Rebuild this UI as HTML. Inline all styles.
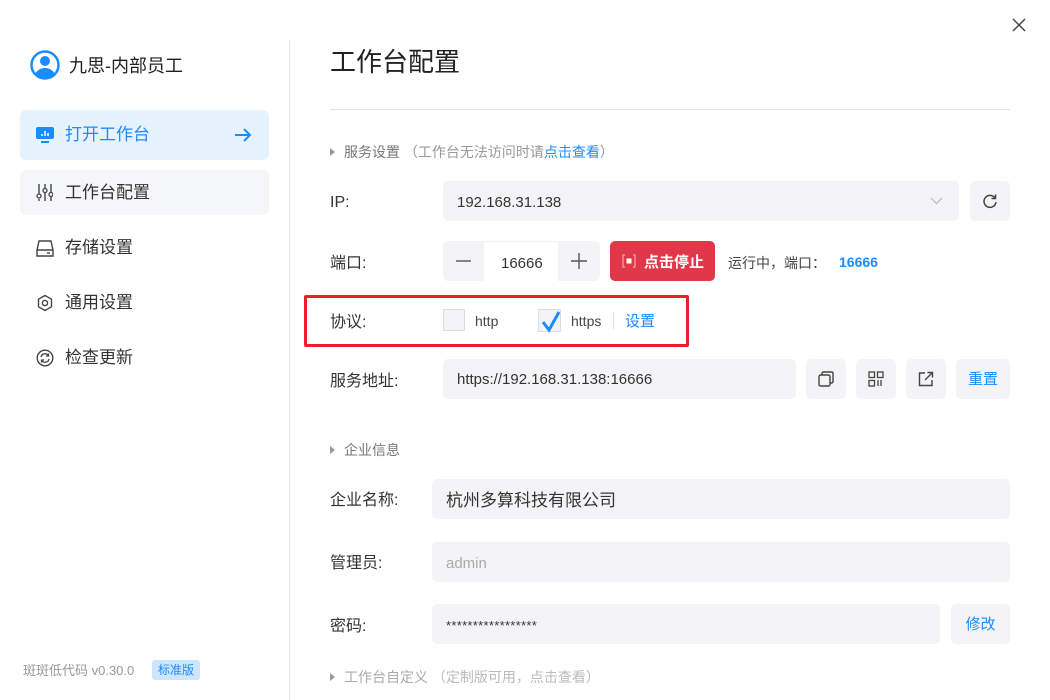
<!DOCTYPE html>
<html><head><meta charset="utf-8"><style>
*{box-sizing:border-box;margin:0;padding:0}
body{width:1050px;height:700px;overflow:hidden;background:#fff;font-family:"Liberation Sans","Noto Sans CJK SC",sans-serif;color:#333;position:relative;line-height:1.2}
.a{position:absolute}
.box{position:absolute;background:#f4f4f6;border-radius:5px}
.lbl{position:absolute;font-size:16px;color:#333;left:330px}
.mi{position:absolute;left:20px;width:249px;border-radius:6px;font-size:17px;color:#333}
.mi span{position:absolute;left:45px}
.btn{position:absolute;background:#f4f4f6;border-radius:5px;width:40px;height:40px;display:flex;align-items:center;justify-content:center}
.sec{position:absolute;left:330px;font-size:14px;color:#777}
.sec:before{content:"";display:inline-block;border-left:5px solid #999;border-top:4px solid transparent;border-bottom:4px solid transparent;margin-right:9px;vertical-align:1px}
</style></head><body>
<svg class="a" style="left:1012px;top:18px" width="14" height="14"><path d="M1 1L13 13M13 1L1 13" stroke="#444" stroke-width="1.5"/></svg>
<svg class="a" style="left:30px;top:50px" width="30" height="30" viewBox="0 0 30 30"><circle cx="15" cy="15" r="13.5" fill="none" stroke="#1a8cff" stroke-width="2.5"/><circle cx="15" cy="11" r="5" fill="#1a8cff"/><path d="M5 24c3-5 7-6 10-6s7 1 10 6c-3 3-6 4-10 4s-7-1-10-4z" fill="#1a8cff"/></svg>
<div class="a" style="left:69px;top:56px;font-size:18px;color:#222">九思-内部员工</div>
<div class="mi" style="top:110px;height:50px;background:#e6f3fe;color:#1a8cff"><svg class="a" style="left:16px;top:17px" width="18" height="17"><rect x="0" y="0" width="18" height="12" rx="2" fill="#1a8cff"/><rect x="5" y="14" width="8" height="2" fill="#1a8cff"/><path d="M6 9V7M9 9V4M12 9V6" stroke="#fff" stroke-width="1.5"/></svg><span style="top:15px">打开工作台</span><svg class="a" style="left:214px;top:18px" width="18" height="14"><path d="M1 7H16M10 1L16 7L10 13" stroke="#1a8cff" stroke-width="2" fill="none"/></svg></div>
<div class="mi" style="top:170px;height:45px;background:#f5f6f8"><svg class="a" style="left:16px;top:14px" width="17" height="17"><path d="M3 0V10M9 0V4M15 0V8M3 15V17M9 9V17M15 13V17" stroke="#444" stroke-width="1.4"/><circle cx="3" cy="12" r="2" fill="none" stroke="#444" stroke-width="1.3"/><circle cx="9" cy="6.5" r="2" fill="none" stroke="#444" stroke-width="1.3"/><circle cx="15" cy="10.5" r="2" fill="none" stroke="#444" stroke-width="1.3"/></svg><span style="top:13px">工作台配置</span></div>
<div class="mi" style="top:236px;height:24px"><svg class="a" style="left:16px;top:4px" width="18" height="17"><path d="M3 1H15L17 10V16H1V10ZM1 10H17" stroke="#444" stroke-width="1.4" fill="none"/><path d="M11 13H14" stroke="#444" stroke-width="1.4"/></svg><span style="top:2px">存储设置</span></div>
<div class="mi" style="top:291px;height:24px"><svg class="a" style="left:16px;top:3px" width="18" height="18" viewBox="0 0 18 18"><path d="M9 1.5L15.5 5.2V12.8L9 16.5L2.5 12.8V5.2Z" stroke="#444" stroke-width="1.4" fill="none" stroke-linejoin="round"/><circle cx="9" cy="9" r="2.6" fill="none" stroke="#444" stroke-width="1.4"/></svg><span style="top:2px">通用设置</span></div>
<div class="mi" style="top:346px;height:24px"><svg class="a" style="left:16px;top:3px" width="18" height="18" viewBox="0 0 18 18"><circle cx="9" cy="9" r="7.8" fill="none" stroke="#444" stroke-width="1.4"/><path d="M5 8A4 4 0 0 1 12.5 7M13 10A4 4 0 0 1 5.5 11M12.5 4.5V7H10M5.5 13.5V11H8" stroke="#444" stroke-width="1.3" fill="none"/></svg><span style="top:2px">检查更新</span></div>
<div class="a" style="left:23px;top:663px;font-size:13px;color:#999">斑斑低代码 v0.30.0</div>
<div class="a" style="left:152px;top:660px;width:48px;height:20px;background:#cce6ff;border-radius:3px;color:#1a8cff;font-size:12px;text-align:center;line-height:20px">标准版</div>
<div class="a" style="left:289px;top:40px;width:1px;height:660px;background:#e5e5e5"></div>
<div class="a" style="left:330px;top:47px;font-size:26px;color:#222">工作台配置</div>
<div class="a" style="left:330px;top:109px;width:680px;height:1px;background:#e3e3e3"></div>
<div class="sec" style="top:144px">服务设置 <span style="color:#999">（工作台无法访问时请<span style="color:#1a8cff">点击查看</span>）</span></div>
<div class="lbl" style="top:193px">IP:</div>
<div class="box" style="left:443px;top:181px;width:516px;height:40px"><span class="a" style="left:14px;top:13px;font-size:15px">192.168.31.138</span><svg class="a" style="left:487px;top:16px" width="13" height="8"><path d="M1 1L6.5 6.5L12 1" stroke="#bbb" stroke-width="1.2" fill="none"/></svg></div>
<div class="btn" style="left:970px;top:181px"><svg width="16" height="16" viewBox="0 0 16 16"><path d="M13 5A6 6 0 1 0 14 9" stroke="#444" stroke-width="1.5" fill="none"/><path d="M13.5 1.5V5.5H9.5" stroke="#444" stroke-width="1.5" fill="none"/></svg></div>
<div class="lbl" style="top:254px">端口:</div>
<div class="box" style="left:443px;top:241px;width:157px;height:40px"><div class="a" style="left:41px;top:0;width:74px;height:40px;background:#fff;border-top:1px solid #f4f4f6"></div><svg class="a" style="left:13px;top:19px" width="15" height="2"><path d="M0 1H15" stroke="#555" stroke-width="1.4"/></svg><span class="a" style="left:58px;top:14px;font-size:15px">16666</span><svg class="a" style="left:128px;top:12px" width="16" height="16"><path d="M0 8H16M8 0V16" stroke="#555" stroke-width="1.4"/></svg></div>
<div class="a" style="left:610px;top:241px;width:105px;height:40px;background:#e03848;border-radius:5px;color:#fff;font-size:15px;font-weight:bold"><svg class="a" style="left:12px;top:13px" width="14" height="14"><path d="M3 1H1V13H3M11 1H13V13H11" stroke="#f4aab0" stroke-width="1.2" fill="none"/><rect x="4.5" y="4.5" width="5" height="5" fill="#fff"/></svg><span class="a" style="left:34px;top:13px">点击停止</span></div>
<div class="a" style="left:728px;top:255px;font-size:14px;color:#444">运行中，端口：</div>
<div class="a" style="left:839px;top:254px;font-size:14px;color:#1a8cff;font-weight:bold">16666</div>
<div class="a" style="left:304px;top:295px;width:385px;height:52px;border:3px solid #e8202a;border-radius:2px"></div>
<div class="lbl" style="top:313px">协议:</div>
<div class="a" style="left:443px;top:309px;width:22px;height:22px;background:#f4f4f6;border:1px solid #dcdde2"></div>
<div class="a" style="left:475px;top:313px;font-size:14px;color:#444">http</div>
<div class="a" style="left:538px;top:309px;width:23px;height:23px;background:#f4f4f6;border:1px solid #dcdde2"><svg class="a" style="left:2px;top:1px" width="20" height="22"><path d="M2 11L8 19L18 1" stroke="#1a8cff" stroke-width="3" fill="none"/></svg></div>
<div class="a" style="left:571px;top:313px;font-size:14px;color:#444">https</div>
<div class="a" style="left:613px;top:312px;width:1px;height:17px;background:#ddd"></div>
<div class="a" style="left:625px;top:313px;font-size:15px;color:#1a8cff">设置</div>
<div class="lbl" style="top:372px">服务地址:</div>
<div class="box" style="left:443px;top:359px;width:353px;height:40px"><span class="a" style="left:14px;top:12px;font-size:15px">https://192.168.31.138:16666</span></div>
<div class="btn" style="left:806px;top:359px"><svg width="16" height="16"><rect x="1" y="4" width="11" height="11" rx="1.5" fill="none" stroke="#444" stroke-width="1.4"/><path d="M4 4V2.5Q4 1 5.5 1H13.5Q15 1 15 2.5V10.5Q15 12 13.5 12H12" fill="none" stroke="#444" stroke-width="1.4"/></svg></div>
<div class="btn" style="left:856px;top:359px"><svg width="16" height="16"><rect x="1" y="1" width="5.5" height="5.5" fill="none" stroke="#444" stroke-width="1.3"/><rect x="9.5" y="1" width="5.5" height="5.5" fill="none" stroke="#444" stroke-width="1.3"/><rect x="1" y="9.5" width="5.5" height="5.5" fill="none" stroke="#444" stroke-width="1.3"/><path d="M10 9V15M13 9V15" stroke="#444" stroke-width="1.3"/></svg></div>
<div class="btn" style="left:906px;top:359px"><svg width="16" height="16"><path d="M7 2H1.5V14.5H14V9" fill="none" stroke="#444" stroke-width="1.4"/><path d="M7 9L14.5 1.5M9.5 1.5H14.5V6.5" fill="none" stroke="#444" stroke-width="1.4"/></svg></div>
<div class="box" style="left:956px;top:359px;width:54px;height:40px;color:#1a8cff;font-size:15px;text-align:center;line-height:42px">重置</div>
<div class="sec" style="top:442px">企业信息</div>
<div class="lbl" style="top:491px">企业名称:</div>
<div class="box" style="left:432px;top:479px;width:578px;height:40px"><span class="a" style="left:14px;top:12px;font-size:17px;color:#333">杭州多算科技有限公司</span></div>
<div class="lbl" style="top:554px">管理员:</div>
<div class="box" style="left:432px;top:542px;width:578px;height:40px"><span class="a" style="left:14px;top:13px;font-size:15px;color:#aaa">admin</span></div>
<div class="lbl" style="top:617px">密码:</div>
<div class="box" style="left:432px;top:604px;width:508px;height:40px"><span class="a" style="left:14px;top:14px;font-size:13px;color:#333;letter-spacing:0.3px">*****************</span></div>
<div class="box" style="left:951px;top:604px;width:59px;height:40px;color:#1a8cff;font-size:15px;text-align:center;line-height:42px">修改</div>
<div class="sec" style="top:669px;color:#aaa">工作台自定义 <span style="color:#bbb">（定制版可用，点击查看）</span></div>
</body></html>
